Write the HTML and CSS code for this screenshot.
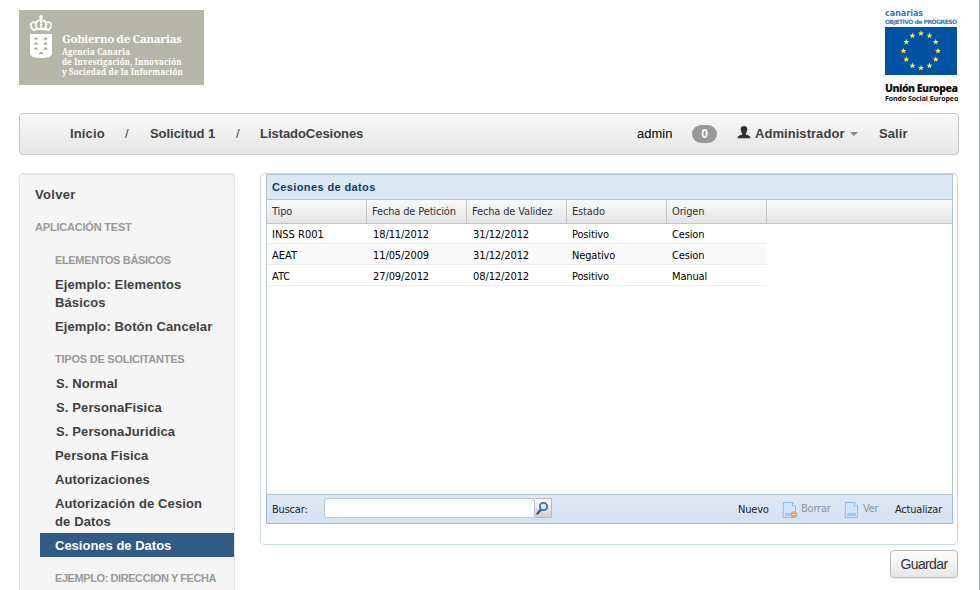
FILE: index.html
```
<!DOCTYPE html>
<html lang="es">
<head>
<meta charset="utf-8">
<title>Cesiones de Datos</title>
<link rel="stylesheet" href="styles.css">
</head>
<body>
<header class="top">
  <div class="gov">
    <svg class="crest" width="24" height="46" viewBox="0 0 24 46">
      <g fill="none" stroke="#fff" stroke-width="2">
        <path d="M12 0v5M10 2h4" stroke-width="1.500"/>
        <path d="M3.500 14C-.5 9 3 5.500 8 8M20.500 14C24.500 9 21 5.500 16 8M8 14C5 8 8 5 12 5s7 3 4 9M12 5v9" stroke-dasharray="3 .5"/>
        <path d="M3.500 15.200Q12 12.500 20.500 15.200" stroke-width="2.400"/>
      </g>
      <path fill="#fff" d="M1 19h22v20q-1 4-11 4T1 39z"/>
      <path fill="#a5a596" d="M4.500 24.500l2.500-2.500 2.500 2.500zM14 24.500l2.500-2.500 2.500 2.500zM4.500 29.500l2.500-2.500 2.500 2.500zM14 29.500l2.500-2.500 2.500 2.500zM4.500 34.500l2.500-2.500 2.500 2.500zM14 34.500l2.500-2.500 2.500 2.500zM9.500 39l2.500-2.500 2.500 2.500z"/>
    </svg>
    <div class="gov-text">
      <div class="gov-name">Gobierno de Canarias</div>
      <div>Agencia Canaria</div>
      <div>de Investigación, Innovación</div>
      <div>y Sociedad de la Información</div>
    </div>
  </div>
  <div class="eu">
    <div class="eu-can">canarias</div>
    <div class="eu-obj">OBJETIVO de PROGRESO</div>
    <svg class="flag" width="72" height="48" viewBox="0 0 72 48">
      <defs><path id="st" fill="#f5ea3c" d="M0-3.200L.8-1 3-1 1.300.4 1.900 2.600 0 1.300-1.900 2.600-1.300.4-3-1-.8-1z"/></defs>
      <rect width="72" height="48" fill="#0052a5"/>
      <use href="#st" x="36" y="6.500"/><use href="#st" x="44.500" y="8.800"/><use href="#st" x="50.700" y="15"/>
      <use href="#st" x="53" y="24"/><use href="#st" x="50.700" y="32.500"/><use href="#st" x="44.500" y="38.800"/>
      <use href="#st" x="36" y="41"/><use href="#st" x="27.500" y="38.800"/><use href="#st" x="21.300" y="32.500"/>
      <use href="#st" x="18.500" y="24"/><use href="#st" x="21.300" y="15"/><use href="#st" x="27.500" y="8.800"/>
    </svg>
    <div class="eu-ue">Unión Europea</div>
    <div class="eu-fse">Fondo Social Europeo</div>
  </div>
</header>
<nav class="nav">
  <ul class="crumbs">
    <li class="c1">Inicio</li><li class="sep s1">/</li><li class="c2">Solicitud 1</li><li class="sep s2">/</li><li class="c3">ListadoCesiones</li>
  </ul>
  <div class="user">
    <span class="login">admin</span>
    <span class="badge">0</span>
    <svg class="person" width="14" height="13" viewBox="0 0 14 13"><path fill="#333" d="M7 0C9.500 0 10.500 1.500 10.300 3.700 10.200 5.500 9.500 6.700 8.900 7.400V8.600L12.300 9.800Q13.400 10.400 13.400 12.300H.6Q.6 10.400 1.700 9.800L5.100 8.600V7.400C4.500 6.700 3.800 5.500 3.700 3.700 3.500 1.500 4.500 0 7 0z"/></svg>
    <span class="role">Administrador</span>
    <span class="caret"></span>
    <span class="exit">Salir</span>
  </div>
</nav>
<div class="cols">
  <aside class="side">
    <a class="item back">Volver</a>
    <h3>Aplicación Test</h3>
    <div class="sub">
      <h3 class="h-el">Elementos básicos</h3>
      <a class="item">Ejemplo: Elementos<br>Básicos</a>
      <a class="item">Ejemplo: Botón Cancelar</a>
      <h3 class="h-ti">Tipos de solicitantes</h3>
      <a class="item nudge">S. Normal</a>
      <a class="item nudge">S. PersonaFisica</a>
      <a class="item nudge">S. PersonaJuridica</a>
      <a class="item">Persona Fisica</a>
      <a class="item">Autorizaciones</a>
      <a class="item">Autorización de Cesion<br>de Datos</a>
      <a class="item active">Cesiones de Datos</a>
      <h3 class="h-ej">Ejemplo: Direccion y Fecha</h3>
    </div>
  </aside>
  <main class="main">
    <section class="panel">
      <div class="grid">
        <div class="title">Cesiones de datos</div>
        <div class="row head"><span>Tipo</span><span>Fecha de Petición</span><span>Fecha de Validez</span><span>Estado</span><span>Origen</span></div>
        <div class="body">
          <div class="row"><span class="wide">INSS R001</span><span class="n">18/11/2012</span><span class="n">31/12/2012</span><span>Positivo</span><span>Cesion</span></div>
          <div class="row alt"><span class="wide">AEAT</span><span class="n">11/05/2009</span><span class="n">31/12/2012</span><span>Negativo</span><span>Cesion</span></div>
          <div class="row"><span class="wide">ATC</span><span class="n">27/09/2012</span><span class="n">08/12/2012</span><span>Positivo</span><span>Manual</span></div>
        </div>
        <div class="bar">
          <label class="find" for="q">Buscar:</label>
          <input id="q" class="q" type="text">
          <button class="go" aria-label="Buscar"><svg width="16" height="17" viewBox="0 0 16 17"><path d="M2.500 13.500L6 9.500" stroke="#2d5a9c" stroke-width="2.400" stroke-linecap="round"/><circle cx="8.500" cy="6.500" r="3.700" fill="#dcecfb" stroke="#3d70b8" stroke-width="1.800"/></svg></button>
          <div class="tools">
            <span class="t-new">Nuevo</span>
            <span class="off"><svg width="16" height="16" viewBox="0 0 16 16"><path d="M1.500.5h9l3 3.500v11.500h-12.500z" fill="#d2e6f9" stroke="#8fb8e4"/><path d="M10.500.5V4h3" fill="#f2f8fe" stroke="#8fb8e4"/><path d="M3 11h9v3H3z" fill="#94ccf8"/><circle cx="12" cy="12.500" r="3.200" fill="#e49b78"/><path d="M10.200 12.500h3.600" stroke="#fff" stroke-width="1.200"/></svg><span class="t-del">Borrar</span></span>
            <span class="off"><svg width="16" height="16" viewBox="0 0 16 16"><path d="M1.500.5h9l3 3.500v11.500h-12.500z" fill="#d2e6f9" stroke="#8fb8e4"/><path d="M10.500.5V4h3" fill="#f2f8fe" stroke="#8fb8e4"/><path d="M3 11h9v3H3z" fill="#94ccf8"/></svg><span class="t-see">Ver</span></span>
            <span class="t-upd">Actualizar</span>
          </div>
        </div>
      </div>
    </section>
    <button class="save">Guardar</button>
  </main>
</div>
</body>
</html>
```
FILE: styles.css
```
* { box-sizing: border-box; }
html { height: 100%; overflow: hidden; }
body {
  margin: 0; height: 590px; overflow: hidden; padding: 10px 20px 0 19px;
  border-right: 1px solid #a9b7c6; background: #fff; color: #404040;
  font: 13px/18px "Liberation Sans", Arial, sans-serif;
}
.top { display: flex; justify-content: space-between; height: 103px; }
.gov { display: flex; width: 185px; height: 75px; padding: 5px 0 0 10px; background: #b6b6a8; color: #fff; }
.gov-text { margin: 16px 0 0 9px; font: bold 8px/10px "Noto Serif", "DejaVu Serif Condensed", "DejaVu Serif", serif; letter-spacing: .12px; white-space: nowrap; }
.gov-name { font-size: 11.500px; line-height: 15px; padding-bottom: 1px; letter-spacing: -.35px; }
.eu { width: 75px; white-space: nowrap; }
.eu-can { margin-left: 1px; height: 8px; font: bold 8px/7px "DejaVu Sans", sans-serif; letter-spacing: 0; color: #2c7bbf; }
.eu-obj { margin-left: 1px; height: 7px; font: bold 6px/7px "DejaVu Sans", sans-serif; letter-spacing: -.5px; color: #2c7bbf; }
.flag { display: block; margin: 2px 0 0 1px; }
.eu-ue { margin: 7px 0 0 1px; height: 11px; font: 800 10.500px/12px "Open Sans", sans-serif; letter-spacing: -.5px; color: #111; }
.eu-fse { margin-left: 1px; font: bold 7px/12px "Open Sans", sans-serif; letter-spacing: -.06px; color: #111; }
.nav {
  display: flex; justify-content: space-between; height: 42px; padding: 0 49px 0 50px;
  border: 1px solid #c6c6c6; border-radius: 4px; background: linear-gradient(#fafafa, #e6e6e6);
  line-height: 40px; font-weight: bold; box-shadow: inset 0 1px 0 #fff; white-space: nowrap;
}
.crumbs { display: flex; margin: 0; padding: 0; list-style: none; letter-spacing: -.05px; }
.c1 { width: 55px; letter-spacing: .15px; } .c2 { width: 86px; } .sep { font-weight: normal; } .s1 { width: 25px; } .s2 { width: 24px; }
.user { display: flex; align-items: center; }
.login { width: 55px; font-weight: normal; color: #000; }
.badge { width: 25px; height: 18px; margin-right: 20px; border-radius: 9px; background: #999; color: #fff; font-size: 12px; line-height: 18px; text-align: center; }
.person { margin: -3px 4px 0 0; }
.role { width: 95px; letter-spacing: .05px; }
.caret { width: 8px; margin-right: 21px; border: 4px solid transparent; border-top-color: #888; border-bottom: 0; }
.exit { width: 30px; letter-spacing: .1px; }
.cols { display: flex; margin-top: 18px; gap: 25px; }
.side { width: 216px; height: 440px; padding: 8px 0 0 15px; border: 1px solid #e3e3e3; border-radius: 4px; background: #f5f5f5; box-shadow: inset 0 1px 1px rgba(0,0,0,.05); font-weight: bold; white-space: nowrap; }
.item { display: block; padding: 4px 0 2px; letter-spacing: .12px; }
.back { letter-spacing: .3px; }
.side h3 { margin: 9px 0 0; padding: 3px 0; font-size: 11px; line-height: 18px; letter-spacing: -.2px; color: #999; text-transform: uppercase; }
.sub { margin-left: 5px; }
.sub > * { padding-left: 15px !important; }
.sub .h-el { letter-spacing: -.35px; }
.sub .h-ti { letter-spacing: -.23px; }
.sub .h-ej { letter-spacing: -.42px; }
.sub .nudge { padding-left: 16px !important; }
.active { background: #315a84; color: #fff; letter-spacing: 0; }
.main { width: 698px; }
.panel { height: 372px; padding: 0 4px 0 5px; border: 1px solid #c5d9e8; border-radius: 5px; }
.grid { display: flex; flex-direction: column; height: 350px; border: 1px solid #b5c6d9; font: 11px/20px "DejaVu Sans Condensed", "DejaVu Sans", sans-serif; color: #000; white-space: nowrap; }
.title { height: 24px; padding-left: 5px; background: #dce8f4; color: #133a66; font: bold 11px/24px "Liberation Sans", Arial, sans-serif; letter-spacing: .38px; }
.row { display: flex; width: 500px; height: 21px; border-bottom: 1px solid #ededed; }
.row span { width: 100px; padding-left: 5px; letter-spacing: -.15px; }
.row .n { letter-spacing: -.1px; padding-left: 6px; }
.row .wide { letter-spacing: 0; }
.head { width: auto; height: 25px; border-top: 1px solid #b5c6d9; border-bottom: 1px solid #b5c6d9; background: linear-gradient(#f9f9f9, #e3e4e6); color: #333; line-height: 23px; }
.head span { border-right: 1px solid #c5c5c5; }
.alt { background: #fafafa; }
.body { flex: 1; margin-top: -1px; }
.body .row { padding-top: 1px; line-height: 21px; }
.bar { display: flex; height: 30px; padding: 0 5px; border: 1px solid #99bce8; border-top-color: #b5c6d9; background: linear-gradient(#dfe9f5, #d3e1f1); line-height: 29px; margin: 0 -1px -1px; letter-spacing: -.2px; }
.find { width: 52px; color: #222; }
.q { width: 211px; height: 20px; margin-top: 3px; padding: 1px 3px; border: 1px solid #bfc5cc; border-radius: 3px; background: linear-gradient(#f4f5f5, #fff 40%); }
.go { display: block; width: 17px; height: 20px; margin-top: 3px; padding: 0; border: 1px solid #b5b8c8; border-left: 0; background: linear-gradient(#fff, #cfcfcf); }
.go svg { display: block; }
.tools { display: flex; margin-left: auto; color: #222; line-height: 30px; }
.t-new { width: 44px; }
.off { display: flex; align-items: center; color: #8b949e; }
.off svg { margin: 1px 3px 0 0; }
.t-del { width: 43px; } .t-see { width: 32px; } .t-upd { width: 52px; }
.save { display: block; width: 68px; height: 28px; margin: 5px 0 0 auto; padding: 0; border: 1px solid #bbb; border-radius: 4px; background: linear-gradient(#fff, #e6e6e6); color: #333; font: 14px/18px "Liberation Sans", Arial, sans-serif; letter-spacing: -.65px; box-shadow: 0 1px 1px rgba(0,0,0,.08); }
```
